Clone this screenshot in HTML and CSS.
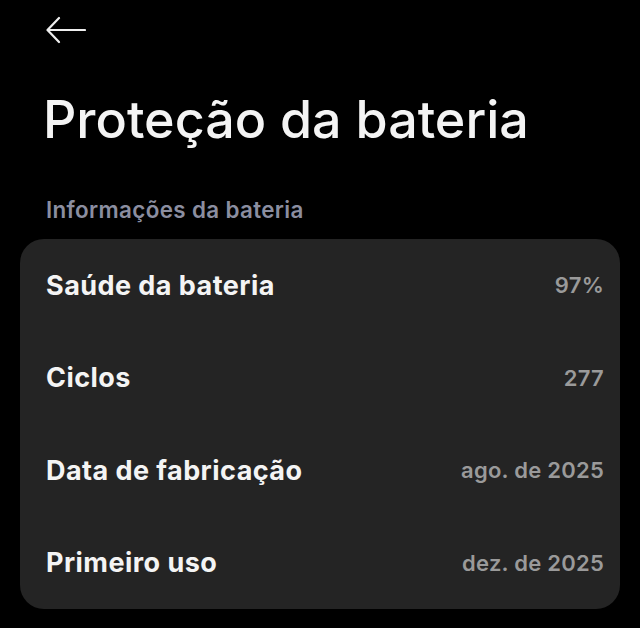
FILE: index.html
```html
<!DOCTYPE html>
<html lang="pt">
<head>
<meta charset="utf-8">
<link rel="stylesheet" href="styles.css">
</head>
<body>
<div class="screen">
  <header class="topbar">
    <svg class="back" width="40" height="28" viewBox="0 0 40 28" aria-label="Voltar">
      <path d="M39 14H2M13 2L1.5 14L13 26" fill="none" stroke="#eeeeee" stroke-width="2.2" stroke-linecap="round" stroke-linejoin="round"/>
    </svg>
  </header>
  <h1 class="title">Proteção da bateria</h1>
  <div class="section-label">Informações da bateria</div>
  <div class="card">
    <div class="row"><span class="label">Saúde da bateria</span><span class="value">97%</span></div>
    <div class="row"><span class="label">Ciclos</span><span class="value">277</span></div>
    <div class="row"><span class="label">Data de fabricação</span><span class="value">ago. de 2025</span></div>
    <div class="row"><span class="label">Primeiro uso</span><span class="value">dez. de 2025</span></div>
  </div>
</div>
</body>
</html>
```
FILE: styles.css
```css
html, body {
  margin: 0;
  padding: 0;
  background: #000;
}
body {
  font-family: Inter, "Noto Sans", sans-serif;
  color: #f2f2f2;
  width: 640px;
  height: 628px;
  overflow: hidden;
}
.screen {
  display: flex;
  flex-direction: column;
}
.topbar {
  height: 60px;
  display: flex;
  align-items: center;
  padding-left: 46px;
}
.back {
  display: block;
}
.title {
  margin: 0;
  padding: 30px 0 0 43px;
  font-size: 52px;
  font-weight: 500;
  line-height: 60px;
  letter-spacing: 0;
  color: #f4f4f4;
}
.section-label {
  margin-top: 45px;
  padding-left: 46px;
  font-size: 22.4px;
  font-weight: 600;
  line-height: 30px;
  letter-spacing: 0.35px;
  color: #8b8ea0;
}
.card {
  margin: 14px 20px 0;
  background: #242424;
  border-radius: 24px;
  display: flex;
  flex-direction: column;
}
.row {
  height: 92.5px;
  display: flex;
  align-items: center;
  justify-content: space-between;
  padding: 0 16px 0 26px;
}
.label {
  font-size: 27px;
  font-weight: 700;
  letter-spacing: 0.45px;
  color: #f4f4f4;
}
.value {
  font-size: 22px;
  font-weight: 600;
  letter-spacing: 0.25px;
  color: #9a9a9a;
}
```
